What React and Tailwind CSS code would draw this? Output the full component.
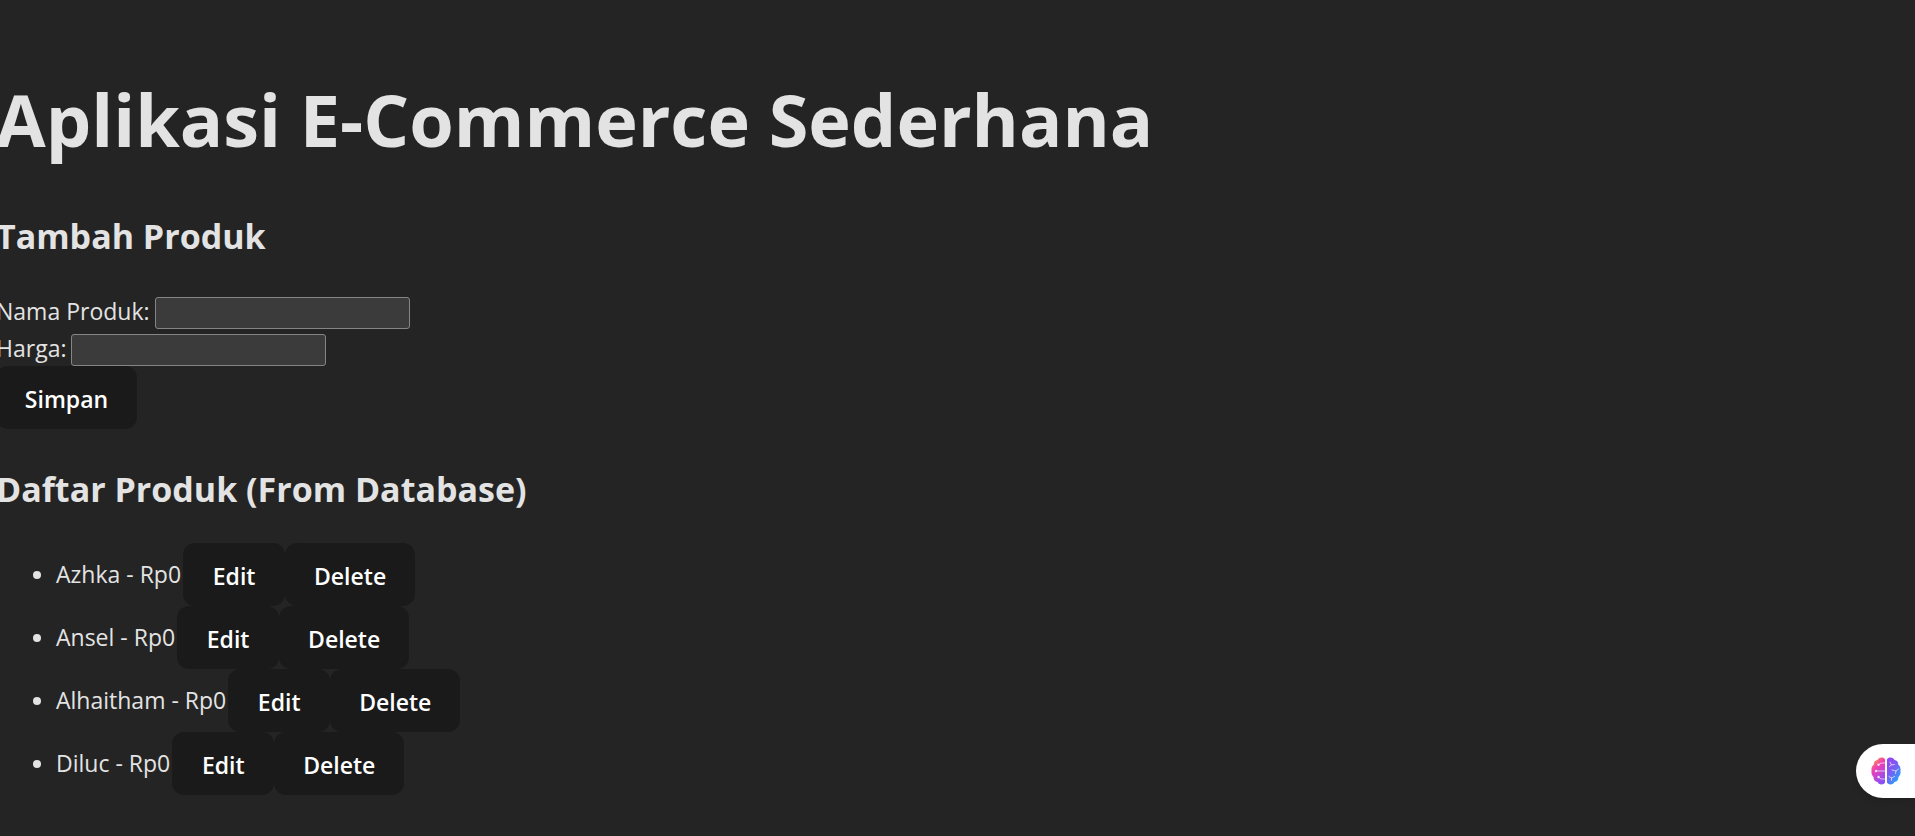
import { useId, useState } from "react";

const initialProducts = [
  { id: 1, name: "Azhka", price: 0 },
  { id: 2, name: "Ansel", price: 0 },
  { id: 3, name: "Alhaitham", price: 0 },
  { id: 4, name: "Diluc", price: 0 },
];

function Button({ className = "", ...props }) {
  return (
    <button
      className={`h-[63px] rounded-xl bg-[#1a1a1a] pt-0.5 text-center text-[23px] leading-9 font-semibold text-white ${className}`}
      {...props}
    />
  );
}

function Field({ label, value, onChange }) {
  const id = useId();
  return (
    <div className="flex h-[37px] items-end gap-[5px]">
      <label htmlFor={id} className="leading-9">{label}</label>
      <input
        id={id}
        value={value}
        onChange={(e) => onChange(e.target.value)}
        className="h-8 w-[255px] rounded-[3px] border border-[#858585] bg-[#3b3b3b] px-1 text-xl outline-none"
      />
    </div>
  );
}

function BrainIcon() {
  return (
    <svg viewBox="0 0 30 28" className="h-7 w-[30px]" aria-hidden="true">
      <defs>
        <linearGradient id="brain-left" x1="0.1" y1="0" x2="0.6" y2="1">
          <stop offset="0.05" stopColor="#ff9a3c" />
          <stop offset="0.4" stopColor="#f03fb4" />
          <stop offset="1" stopColor="#8a50f5" />
        </linearGradient>
        <linearGradient id="brain-right" x1="0" y1="0" x2="0.7" y2="1">
          <stop offset="0" stopColor="#9a40ee" />
          <stop offset="0.5" stopColor="#7a5cf5" />
          <stop offset="1" stopColor="#1fa8fa" />
        </linearGradient>
      </defs>
      <path fill="url(#brain-left)" d="M14 2.5C13.5 1 12 .5 10.5 .5C8.5 .5 7 1.6 6.5 3C4 3.3 2.5 5.2 2.8 7.6C1 9 .2 11 .5 14C.2 16.5 1 18.5 2.5 20C2.5 22.8 4 24.8 6.5 25C7.2 26.7 8.7 27.6 10.5 27.5C12 27.4 13.5 26.8 14 25.5Z" />
      <path fill="url(#brain-right)" d="M16 2.5C16.5 1 18 .5 19.5 .5C21.5 .5 23 1.6 23.5 3C26 3.3 27.5 5.2 27.2 7.6C29 9 29.8 11 29.5 14C29.8 16.5 29 18.5 27.5 20C27.5 22.8 26 24.8 23.5 25C22.8 26.7 21.3 27.6 19.5 27.5C18 27.4 16.5 26.8 16 25.5Z" />
      <g fill="none" stroke="#fff" strokeOpacity=".65" strokeWidth="1" strokeLinecap="round">
        <path d="M14 6H10L8 7.5M14 14H5M14 22H10L7.5 20" />
        <path d="M19 5L20.5 8L23.5 7.5M20.5 8L18.5 9.5M21 13L25 14L27.5 12M25 14L24.5 16.5M18 19.5L20.5 21L23.5 19.5M20.5 21V23.5" />
      </g>
      <g fill="#fff" fillOpacity=".8">
        <circle cx="7.5" cy="7.8" r="1.2" />
        <circle cx="5" cy="14" r="1.2" />
        <circle cx="7.5" cy="20" r="1.2" />
      </g>
    </svg>
  );
}

export default function App() {
  const [products, setProducts] = useState(initialProducts);
  const [name, setName] = useState("");
  const [price, setPrice] = useState("");

  const save = (e) => {
    e.preventDefault();
    setProducts([...products, { id: Date.now(), name, price: Number(price) }]);
    setName("");
    setPrice("");
  };

  return (
    <div className="min-h-screen overflow-x-hidden bg-[#242424] font-['Open_Sans','Noto_Sans',sans-serif] text-[23px] text-[#e3e3e3]">
      <main className="-ml-1 pt-[77px]">
        <h1 className="text-[72px] leading-[84px] font-bold">Aplikasi E-Commerce Sederhana</h1>
        <h2 className="mt-12 text-[34px] leading-[54px] font-bold">Tambah Produk</h2>
        <form onSubmit={save} className="mt-[29px]">
          <Field label="Nama Produk:" value={name} onChange={setName} />
          <Field label="Harga:" value={price} onChange={setPrice} />
          <Button type="submit" className="w-[141px]">Simpan</Button>
        </form>
        <h2 className="mt-[33px] text-[34px] leading-[54px] font-bold">Daftar Produk (From Database)</h2>
        <ul className="mt-[27px] list-disc pl-[60px]">
          {products.map((p) => (
            <li key={p.id} className="h-[63px] leading-[63px]">
              <div className="inline-flex items-center align-top">
                <span className="pr-0.5">{p.name} - Rp{p.price}</span>
                <Button type="button" className="w-[102px]">Edit</Button>
                <Button
                  type="button"
                  className="w-[130px]"
                  onClick={() => setProducts(products.filter((q) => q.id !== p.id))}
                >
                  Delete
                </Button>
              </div>
            </li>
          ))}
        </ul>
      </main>
      <button
        aria-label="Assistant"
        className="fixed right-0 bottom-[38px] flex h-[54px] w-[59px] items-center rounded-l-full bg-white pl-[15px] shadow-md"
      >
        <BrainIcon />
      </button>
    </div>
  );
}
